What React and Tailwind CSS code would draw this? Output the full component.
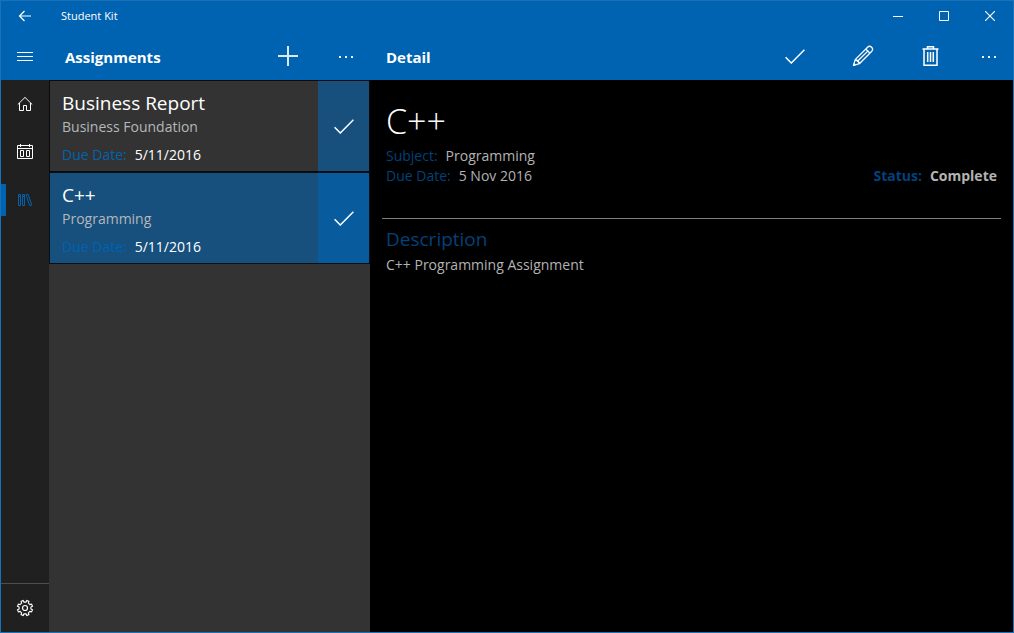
import React from 'react';

function Icon({ w, h, children }) {
  return (
    <svg width={w} height={h} viewBox={`0 0 ${w} ${h}`} fill="none" stroke="currentColor" aria-hidden="true">
      {children}
    </svg>
  );
}

const BackIcon = () => (
  <Icon w={14} h={12}>
    <path d="M1.5 6H13M6.5 1L1.5 6L6.5 11" strokeWidth="1.2" />
  </Icon>
);

const MenuIcon = () => (
  <Icon w={16} h={9}>
    <path d="M0 .5H16M0 4.5H16M0 8.5H16" />
  </Icon>
);

const PlusIcon = () => (
  <Icon w={20} h={20}>
    <path d="M10 0V20M0 10H20" strokeWidth="2" strokeOpacity=".85" />
  </Icon>
);

const DotsIcon = () => (
  <Icon w={16} h={2}>
    <path d="M1 1H3M7 1H9M13 1H15" strokeWidth="2" strokeOpacity=".95" />
  </Icon>
);

const CheckIcon = () => (
  <Icon w={20} h={16}>
    <path d="M.6 9.2L6.3 15L19.4 1.8" strokeWidth="1.5" />
  </Icon>
);

const PencilIcon = () => (
  <Icon w={22} h={22}>
    <path
      d="M1.5 20.5L3.2 14.6L15.6 2.2Q17.6 .4 19.6 2.2Q21.5 4.2 19.8 6.2L7.4 18.7Z M13.8 4L18 8.2M3.2 14.6Q6.6 15.2 7.4 18.7M5 16.8L16 5.9"
      strokeWidth="1.3"
      strokeLinejoin="round"
    />
    <path d="M1.2 20.8L2 17.8L4.2 20Z" fill="currentColor" stroke="none" />
  </Icon>
);

const TrashIcon = () => (
  <Icon w={18} h={20}>
    <path d="M.5 3H16.5M5.5 2.5V.8H11.5V2.5M2 3.5V19.2H15V3.5" strokeWidth="1.5" />
    <path d="M5.7 6V16M8.5 6V16M11.3 6V16" strokeWidth="1.5" />
  </Icon>
);

const HomeIcon = () => (
  <Icon w={16} h={16}>
    <path d="M.8 8.5L8 1.4L15.2 8.5M2.5 7V14.5H6.5V9.5H9.5V14.5H13.5V7" />
  </Icon>
);

const CalendarIcon = () => (
  <Icon w={16} h={16}>
    <path d="M.5 1.5H15.5V14.5H.5ZM.5 4.5H15.5M3.5 0V3M12.5 0V3M3.5 6.5H6.5V12.5H3.5ZM9.5 6.5H12.5V12.5H9.5Z" />
  </Icon>
);

const LibraryIcon = () => (
  <Icon w={16} h={14}>
    <path d="M1.5 1.5H3.5V12.5H1.5ZM5.5 1.5H7.5V12.5H5.5ZM9 1.8L11 1.2L14.8 12L12.8 12.7ZM1.5 3.5H3.5M5.5 3.5H7.5" />
  </Icon>
);

const GearIcon = () => (
  <Icon w={18} h={18}>
    <circle cx="9" cy="9" r="2.5" strokeWidth="1.2" />
    <path
      d="M7.2 1.5L8 3.1H10L10.8 1.5L12.9 2.4L12.4 4.1L13.9 5.6L15.6 5.1L16.5 7.2L14.9 8V10L16.5 10.8L15.6 12.9L13.9 12.4L12.4 13.9L12.9 15.6L10.8 16.5L10 14.9H8L7.2 16.5L5.1 15.6L5.6 13.9L4.1 12.4L2.4 12.9L1.5 10.8L3.1 10V8L1.5 7.2L2.4 5.1L4.1 5.6L5.6 4.1L5.1 2.4Z"
      strokeWidth="1.1"
    />
  </Icon>
);

const MinimizeIcon = () => (
  <Icon w={10} h={10}>
    <path d="M0 5.5H10" />
  </Icon>
);

const MaximizeIcon = () => (
  <Icon w={10} h={10}>
    <path d="M.5 .5H9.5V9.5H.5Z" />
  </Icon>
);

const CloseIcon = () => (
  <Icon w={10} h={10}>
    <path d="M0 0L10 10M10 0L0 10" strokeWidth="1.1" />
  </Icon>
);

function IconButton({ label, className, children }) {
  return (
    <button type="button" aria-label={label} className={`flex shrink-0 items-center justify-center ${className}`}>
      {children}
    </button>
  );
}

function NavLink({ label, href, active, children }) {
  return (
    <a
      href={href}
      aria-label={label}
      aria-current={active ? 'page' : undefined}
      className={`relative flex h-12 items-center justify-center ${active ? 'text-[#0063b1]' : 'text-white'}`}
    >
      {active && <span className="absolute left-0 top-2 h-8 w-[5px] bg-[#0063b1]" />}
      {children}
    </a>
  );
}

const ASSIGNMENTS = [
  { title: 'Business Report', subject: 'Business Foundation', due: '5/11/2016', selected: false },
  { title: 'C++', subject: 'Programming', due: '5/11/2016', selected: true },
];

function AssignmentItem({ title, subject, due, selected }) {
  return (
    <li className={`flex h-[92px] border border-black/80 ${selected ? 'bg-[#174f7d]' : 'bg-[#333333]'}`}>
      <div className="flex min-w-0 flex-1 flex-col pl-3 pt-2">
        <h2 className="text-[19px] leading-7 text-white">{title}</h2>
        <p className="text-sm leading-5 text-[#b4b8bb]">{subject}</p>
        <p className="mt-2 flex gap-2 text-sm leading-5">
          <span className="text-[#0063b1]">Due Date:</span>
          <span className="text-white">{due}</span>
        </p>
      </div>
      <IconButton
        label={`Mark ${title} complete`}
        className={`w-[51px] text-white ${selected ? 'bg-[#085b9d]' : 'bg-[#174f7d]'}`}
      >
        <CheckIcon />
      </IconButton>
    </li>
  );
}

export default function App() {
  return (
    <div className="flex h-screen flex-col border border-[#1a71b8] bg-black font-['Open_Sans','Noto_Sans',sans-serif]">
      <header className="bg-[#0063b1] text-white">
        <div className="flex h-[30px] items-stretch">
          <IconButton label="Back" className="w-12">
            <BackIcon />
          </IconButton>
          <span className="flex flex-1 items-center pl-3 text-[11px]">Student Kit</span>
          <IconButton label="Minimize" className="w-[46px]">
            <MinimizeIcon />
          </IconButton>
          <IconButton label="Maximize" className="w-[46px]">
            <MaximizeIcon />
          </IconButton>
          <IconButton label="Close" className="w-[46px]">
            <CloseIcon />
          </IconButton>
        </div>
        <div className="flex h-[49px] items-stretch">
          <IconButton label="Menu" className="w-12 pt-0.5">
            <MenuIcon />
          </IconButton>
          <div className="flex w-[321px] shrink-0 items-stretch">
            <h1 className="flex flex-1 items-center pl-4 pt-1 text-[15px] font-bold">Assignments</h1>
            <IconButton label="Add assignment" className="w-[68px]">
              <PlusIcon />
            </IconButton>
            <IconButton label="More list options" className="w-12 pt-0.5">
              <DotsIcon />
            </IconButton>
          </div>
          <div className="flex flex-1 items-stretch">
            <h1 className="flex flex-1 items-center pl-4 pt-1 text-[15px] font-bold">Detail</h1>
            <IconButton label="Complete" className="w-[68px]">
              <CheckIcon />
            </IconButton>
            <IconButton label="Edit" className="w-[68px]">
              <PencilIcon />
            </IconButton>
            <IconButton label="Delete" className="w-[68px]">
              <TrashIcon />
            </IconButton>
            <IconButton label="More detail options" className="w-12 pt-0.5">
              <DotsIcon />
            </IconButton>
          </div>
        </div>
      </header>

      <div className="flex min-h-0 flex-1">
        <nav className="flex w-12 shrink-0 flex-col bg-[#202020]">
          <NavLink label="Home" href="#home">
            <HomeIcon />
          </NavLink>
          <NavLink label="Calendar" href="#calendar">
            <CalendarIcon />
          </NavLink>
          <NavLink label="Assignments" href="#assignments" active>
            <LibraryIcon />
          </NavLink>
          <div className="mt-auto border-t border-[#4d4d4d]">
            <NavLink label="Settings" href="#settings">
              <GearIcon />
            </NavLink>
          </div>
        </nav>

        <section className="w-[321px] shrink-0 bg-[#333333]">
          <ul>
            {ASSIGNMENTS.map((item) => (
              <AssignmentItem key={item.title} {...item} />
            ))}
          </ul>
        </section>

        <main className="min-w-0 flex-1 px-3 pt-4 text-sm leading-5 text-[#b3b3b3]">
          <div className="border-b border-[#808080] px-1 pb-8">
            <h2 className="text-[34px] font-light leading-[50px] text-white">C++</h2>
            <p className="flex gap-2">
              <span className="text-[#00427a]">Subject:</span>
              <span>Programming</span>
            </p>
            <div className="flex justify-between">
              <p className="flex gap-2">
                <span className="text-[#00427a]">Due Date:</span>
                <span>5 Nov 2016</span>
              </p>
              <p className="flex gap-2 font-bold">
                <span className="text-[#00427a]">Status:</span>
                <span>Complete</span>
              </p>
            </div>
          </div>
          <div className="px-1 pt-1">
            <h3 className="text-[19px] leading-8 text-[#00427a]">Description</h3>
            <p>C++ Programming Assignment</p>
          </div>
        </main>
      </div>
    </div>
  );
}
